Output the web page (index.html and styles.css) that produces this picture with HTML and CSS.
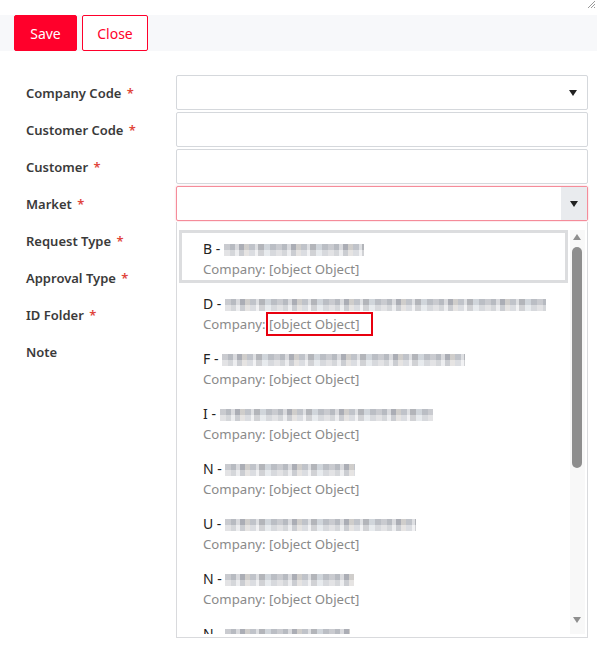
FILE: index.html
```html
<!DOCTYPE html>
<html>
<head>
<meta charset="utf-8">
<link rel="stylesheet" href="styles.css">
</head>
<body>
<svg class="grip" width="9" height="9" viewBox="0 0 9 9"><path d="M1 8 L8 1 M4 8 L8 4 M7 8 L8 7" stroke="#9a9a9a" stroke-width="1"/></svg>
<div class="toolbar">
  <button class="btn save">Save</button>
  <button class="btn close">Close</button>
</div>
<div class="form">
  <div class="row"><label>Company Code <span class="req">*</span></label><div class="input select"><span class="caret"></span></div></div>
  <div class="row"><label>Customer Code <span class="req">*</span></label><div class="input"></div></div>
  <div class="row"><label>Customer <span class="req">*</span></label><div class="input"></div></div>
  <div class="row"><label>Market <span class="req">*</span></label><div class="input invalid"><span class="btnarea"><span class="caret"></span></span></div></div>
  <div class="row"><label>Request Type <span class="req">*</span></label></div>
  <div class="row"><label>Approval Type <span class="req">*</span></label></div>
  <div class="row"><label>ID Folder <span class="req">*</span></label></div>
  <div class="row"><label>Note</label></div>

  <div class="dropdown">
    <div class="list">
      <div class="item active"><div class="name">B - <span class="blur" style="width:140px"></span></div><div class="comp">Company: [object Object]</div></div>
      <div class="item"><div class="name">D - <span class="blur" style="width:321px"></span></div><div class="comp">Company: <span class="mark">[object Object]</span></div></div>
      <div class="item"><div class="name">F - <span class="blur" style="width:243px"></span></div><div class="comp">Company: [object Object]</div></div>
      <div class="item"><div class="name">I - <span class="blur" style="width:213px"></span></div><div class="comp">Company: [object Object]</div></div>
      <div class="item"><div class="name">N - <span class="blur" style="width:130px"></span></div><div class="comp">Company: [object Object]</div></div>
      <div class="item"><div class="name">U - <span class="blur" style="width:191px"></span></div><div class="comp">Company: [object Object]</div></div>
      <div class="item"><div class="name">N - <span class="blur" style="width:129px"></span></div><div class="comp">Company: [object Object]</div></div>
      <div class="item"><div class="name">N - <span class="blur" style="width:125px"></span></div><div class="comp">Company: [object Object]</div></div>
    </div>
    <div class="scrollbar">
      <span class="arrow up"></span>
      <span class="thumb"></span>
      <span class="arrow down"></span>
    </div>
  </div>
</div>
</body>
</html>
```
FILE: styles.css
```css
* { box-sizing: border-box; }
html, body { margin: 0; padding: 0; background: #fff; }
body {
  font-family: "Noto Sans", "Open Sans", sans-serif;
  color: #333;
  position: relative;
  width: 597px;
  height: 649px;
  overflow: hidden;
}
.grip { position: absolute; right: 1px; top: 0; }
.toolbar {
  margin-top: 15px;
  height: 36px;
  background: #f7f8fa;
  display: flex;
  gap: 5px;
  padding-left: 14px;
}
.btn {
  font-family: inherit;
  font-size: 14px;
  height: 36px;
  border-radius: 2px;
  padding: 0;
  cursor: pointer;
}
.save {
  width: 63px;
  background: #ff002b;
  color: #fff;
  border: 1px solid #ff002b;
}
.close {
  width: 66px;
  background: #fff;
  color: #ff002b;
  border: 1px solid #ff002b;
}
.form {
  position: relative;
  padding: 24px 9px 0 26px;
  display: flex;
  flex-direction: column;
  gap: 2px;
}
.row {
  display: grid;
  grid-template-columns: 150px 1fr;
  height: 35px;
  align-items: center;
}
label {
  font-size: 13px;
  font-weight: 600;
  color: #3a3a3a;
}
.req { color: #e0453a; margin-left: 2px; }
.input {
  height: 35px;
  border: 1px solid #d5d8dc;
  border-radius: 2px;
  position: relative;
  background: #fff;
  display: flex;
  justify-content: flex-end;
  align-items: center;
}
.select { padding-right: 10px; }
.caret {
  width: 0; height: 0;
  border-left: 4px solid transparent;
  border-right: 4px solid transparent;
  border-top: 6px solid #222;
}
.invalid {
  border-color: #f58c9a;
  box-shadow: 0 0 2px rgba(245, 120, 140, 0.5);
}
.btnarea {
  width: 26px;
  height: 33px;
  background: #e9ebee;
  display: flex;
  align-items: center;
  justify-content: center;
}
.dropdown {
  position: absolute;
  left: 176px;
  top: 171px;
  width: 412px;
  height: 416px;
  border: 1px solid #d9dadd;
  border-top: none;
  background: #fff;
  display: flex;
  padding: 8px 2px 0 2px;
}
.list {
  flex: 1;
  height: 404px;
  overflow: hidden;
}
.item {
  border: 3px solid transparent;
  padding: 5px 0 0 21px;
  height: 53px;
  margin-bottom: 2px;
  line-height: 21px;
}
.item.active { border-color: #dcdddf; }
.name { font-size: 14px; color: #222; white-space: nowrap; }
.comp { font-size: 13.2px; color: #8a8a8a; white-space: nowrap; }
.blur {
  display: inline-block;
  height: 12px;
  vertical-align: -2px;
  background:
    repeating-linear-gradient(0deg, rgba(255,255,255,0.35) 0 6px, rgba(120,125,135,0.12) 6px 12px),
    repeating-linear-gradient(90deg,
      #cfd0d4 0 6px, #b8bbc2 6px 11px, #e2e3e6 11px 15px,
      #a8abb3 15px 20px, #d6d3cf 20px 25px, #c3c6cd 25px 31px,
      #e9eaec 31px 34px, #b2b4b9 34px 40px, #d8dde3 40px 46px, #bcbfc6 46px 52px);
  opacity: 0.9;
}
.mark {
  border: 2px solid #e8000f;
  padding: 1px 12px 1px 1px;
  margin-left: -3px;
}
.scrollbar {
  width: 15px;
  margin-left: 2px;
  background: #f8f8f8;
  position: relative;
  height: 404px;
}
.arrow {
  position: absolute;
  left: 3px;
  width: 0; height: 0;
  border-left: 4px solid transparent;
  border-right: 4px solid transparent;
}
.arrow.up { top: 4px; border-bottom: 6px solid #8e8e8e; }
.arrow.down { top: 387px; border-top: 6px solid #8e8e8e; }
.thumb {
  position: absolute;
  left: 2px;
  top: 17px;
  width: 10px;
  height: 221px;
  background: #8e8e8e;
  border-radius: 5px;
}
```
